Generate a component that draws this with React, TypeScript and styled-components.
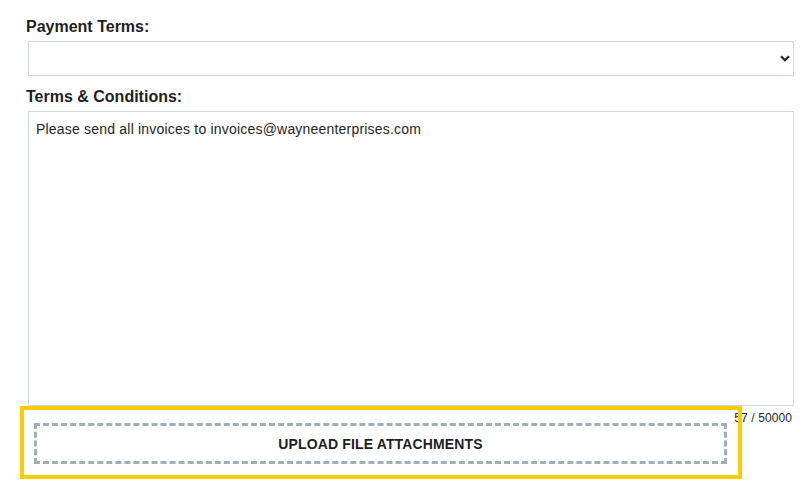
import React, { useEffect, useRef } from "react";
import styled, { createGlobalStyle } from "styled-components";

const GlobalStyle = createGlobalStyle`
  html, body {
    margin: 0;
    padding: 0;
    background: #ffffff;
  }
  body {
    font-family: "Liberation Sans", Arial, sans-serif;
    color: #222222;
  }
`;

const Form = styled.div`
  width: 806px;
  box-sizing: border-box;
  padding: 18px 12px 0 26px;
`;

const Label = styled.label`
  display: block;
  font-size: 16px;
  line-height: 18px;
  font-weight: 700;
  color: #1f1f1f;
  margin-bottom: 5px;
`;

const SelectWrap = styled.div`
  position: relative;
  margin: 0 0 12px 2px;
`;

const Select = styled.select`
  display: block;
  width: 100%;
  height: 35px;
  box-sizing: border-box;
  border: 1px solid #cfd9de;
  border-radius: 0;
  background: #ffffff;
  appearance: none;
  font-family: inherit;
  font-size: 14px;
  padding: 0 30px 0 8px;
  outline: none;
`;

const Chevron = styled.svg`
  position: absolute;
  right: 4px;
  top: 14px;
  width: 10px;
  height: 7px;
  pointer-events: none;
`;

const TextWrap = styled.div`
  position: relative;
  margin-left: 2px;
`;

const TextArea = styled.textarea`
  display: block;
  width: 100%;
  height: 295px;
  box-sizing: border-box;
  border: 1px solid #cfd9de;
  border-radius: 0;
  padding: 8px 7px;
  font-family: "Liberation Sans", Arial, sans-serif;
  font-size: 14px;
  line-height: 18px;
  letter-spacing: 0.2px;
  color: #1f1f1f;
  caret-color: #000000;
  resize: none;
  outline: none;
`;

const Counter = styled.div`
  position: absolute;
  right: 2px;
  top: calc(100% + 5px);
  font-size: 12px;
  letter-spacing: 0.1px;
  color: #1f1f1f;
`;

const UploadFrame = styled.div`
  position: relative;
  width: 722px;
  box-sizing: border-box;
  margin-left: -6px;
  border: 4px solid #fecb00;
  padding: 13px 11px 11px 10px;
  background: transparent;
`;

const UploadButton = styled.button`
  display: flex;
  align-items: center;
  justify-content: center;
  width: 100%;
  height: 41px;
  box-sizing: border-box;
  border: 3px dashed #a2adba;
  background: #ffffff;
  font-family: "Liberation Sans", Arial, sans-serif;
  font-size: 14px;
  font-weight: 700;
  color: #1f1f1f;
  letter-spacing: 0.15px;
  cursor: pointer;
`;

export default function App() {
  const text = "Please send all invoices to invoices@wayneenterprises.com";
  const areaRef = useRef<HTMLTextAreaElement>(null);

  useEffect(() => {
    const el = areaRef.current;
    if (el) {
      el.focus();
      el.setSelectionRange(text.length, text.length);
    }
  }, []);

  return (
    <>
      <GlobalStyle />
      <Form>
        <Label>Payment Terms:</Label>
        <SelectWrap>
          <Select defaultValue="">
            <option value=""></option>
            <option value="net30">Net 30</option>
            <option value="net60">Net 60</option>
          </Select>
          <Chevron viewBox="0 0 10 7">
            <path d="M1 1.2 L5 5.2 L9 1.2" fill="none" stroke="#222" strokeWidth="2.2" />
          </Chevron>
        </SelectWrap>
        <Label>Terms &amp; Conditions:</Label>
        <TextWrap>
          <TextArea ref={areaRef} defaultValue={text} />
          <Counter>{text.length} / 50000</Counter>
        </TextWrap>
        <UploadFrame>
          <UploadButton>UPLOAD FILE ATTACHMENTS</UploadButton>
        </UploadFrame>
      </Form>
    </>
  );
}
